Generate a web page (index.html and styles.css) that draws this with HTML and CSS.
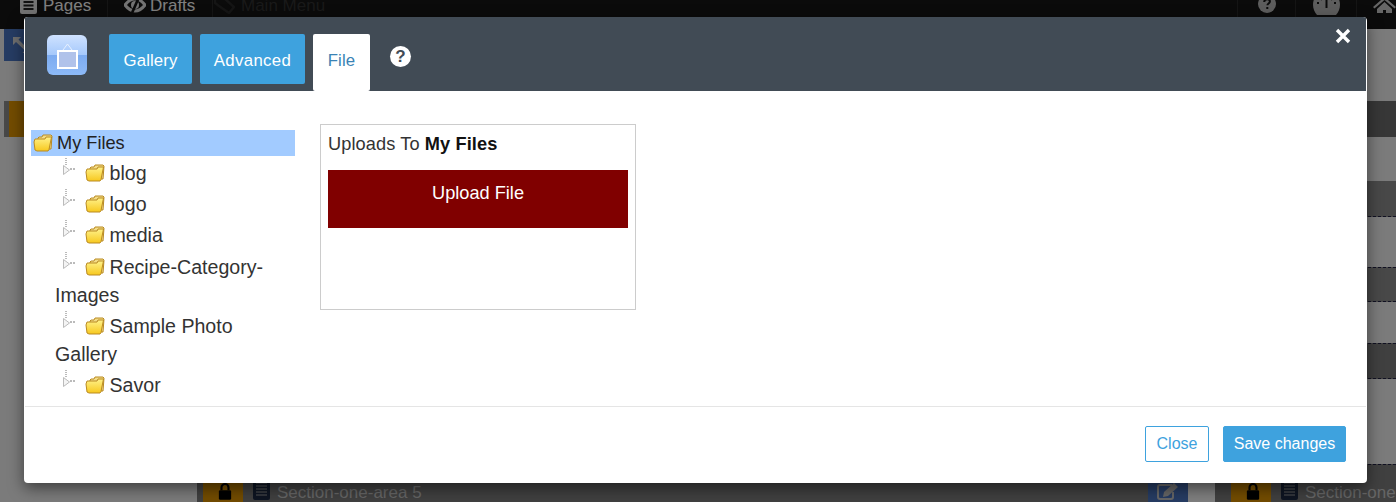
FILE: index.html
```html
<!DOCTYPE html>
<html lang="en">

<head>
  <meta charset="utf-8">
  <meta name="viewport" content="width=device-width, initial-scale=1">
  <title>File manager</title>
  <link rel="stylesheet" href="styles.css">
</head>

<body>
  <!-- page behind the dialog -->
  <div class="page">
    <nav class="topbar">
      <div class="nav-left">
        <span class="nav-item nav-pages">
          <svg class="nav-icon" width="17" height="17" viewBox="0 0 17 17"><rect width="17" height="17" rx="2" fill="#e6e6e6"/><path d="M3.500 5h10M3.500 8.500h10M3.500 12h10" stroke="#222" stroke-width="2"/></svg>
          Pages
        </span>
        <span class="nav-item nav-drafts">
          <svg class="nav-icon" width="22" height="16" viewBox="0 0 22 16"><path d="M1 8c3-4 6-6 10-6s7 2 10 6c-3 4-6 6-10 6S4 12 1 8z" fill="none" stroke="#e6e6e6" stroke-width="3"/><circle cx="11" cy="8" r="4" fill="#e6e6e6"/><path d="M15 0 8 16" stroke="#161616" stroke-width="2.600"/></svg>
          Drafts
        </span>
        <span class="nav-item nav-menu">
          <svg class="nav-icon" width="21" height="17" viewBox="0 0 21 17"><path d="M1 1h9l10 9-5 6L5 9 1 6z" fill="none" stroke="#2a2a2a" stroke-width="2.400"/></svg>
          Main Menu
        </span>
      </div>
      <div class="nav-right">
        <span class="nav-tool tool-help">
          <svg width="18" height="18" viewBox="0 0 18 18"><circle cx="9" cy="9" r="9" fill="#bbb"/><path d="M6.200 7c.2-2 1.300-2.800 2.900-2.800 1.700 0 2.800 1 2.800 2.300 0 2-2.500 2-2.500 3.800" fill="none" stroke="#161616" stroke-width="2"/><rect x="8.300" y="12" width="2" height="2" fill="#161616"/></svg>
        </span>
        <span class="nav-tool tool-gauge">
          <svg width="27" height="24" viewBox="0 0 27 24"><path d="M13.500 0C6 0 0 6 0 13.500c0 4 1.500 7.500 4 10.500h19c2.500-3 4-6.500 4-10.500C27 6 21 0 13.500 0z" fill="#bbb"/><path d="M13.500 8v9M7 6l2 3M20 6l-2 3M4 12h2M21 12h2" stroke="#161616" stroke-width="2"/></svg>
        </span>
        <span class="nav-tool tool-home">
          <svg width="23" height="16" viewBox="0 0 23 16"><path d="M11.500 0 0 10l1.500 1.500 10-8.500 10 8.500L23 10zM4 12v6h6v-5h3v5h6v-6l-7.500-7z" fill="#ccc"/></svg>
        </span>
      </div>
    </nav>

    <div class="toolbar">
      <span class="expand-btn">
        <svg width="20" height="20" viewBox="0 0 20 20"><path d="M0 0h8L5.500 2.500 14 11l2.500-2.500V16h-7l2.500-2.500L3 5 0 8z" fill="#ddd"/></svg>
      </span>
    </div>

    <div class="band band-head"><span class="band-grip"></span><span class="band-lock"></span></div>
    <div class="band band-b"></div>
    <div class="band band-c"></div>
    <div class="band band-d"></div>
    <div class="band band-e">
      <span class="band-lock">
        <svg width="14" height="17" viewBox="0 0 16 19"><path d="M4 8V5a4 4 0 0 1 8 0v3" fill="none" stroke="#000" stroke-width="2.400"/><rect x="1" y="8" width="14" height="11" rx="1.500" fill="#000"/></svg>
      </span>
      <svg class="band-doc" width="17" height="20" viewBox="0 0 17 20"><rect width="17" height="20" rx="2" fill="#1c2a44"/><path d="M3 3h11M3 6h11M3 9h11M3 12h11M3 15h11" stroke="#aaa"/></svg>
      <span class="band-title band-title-main">Section-one-area 5</span>
      <span class="band-edit">
        <svg width="22" height="17" viewBox="0 0 22 17"><path d="M15 2H3a2 2 0 0 0-2 2v10a2 2 0 0 0 2 2h11a2 2 0 0 0 2-2V9" fill="none" stroke="#ccc" stroke-width="2"/><path d="M7 9l10-9 4 4-10 9-5 1z" fill="#ccc"/></svg>
      </span>
      <span class="band-blank"></span>
      <span class="band-lock band-lock-second">
        <svg width="14" height="17" viewBox="0 0 16 19"><path d="M4 8V5a4 4 0 0 1 8 0v3" fill="none" stroke="#000" stroke-width="2.400"/><rect x="1" y="8" width="14" height="11" rx="1.500" fill="#000"/></svg>
      </span>
      <svg class="band-doc" width="17" height="20" viewBox="0 0 17 20"><rect width="17" height="20" rx="2" fill="#1c2a44"/><path d="M3 3h11M3 6h11M3 9h11M3 12h11M3 15h11" stroke="#aaa"/></svg>
      <span class="band-title">Section-one</span>
    </div>
  </div>

  <div class="backdrop"></div>

  <div class="modal">
    <div class="modal-header">
      <svg class="modal-logo" width="40" height="40" viewBox="0 0 40 40">
        <defs>
          <linearGradient id="logoBg" x1="0" y1="0" x2="0" y2="1">
            <stop offset="0" stop-color="#cfe2ff"/>
            <stop offset=".49" stop-color="#a6c9fb"/>
            <stop offset=".5" stop-color="#7cabf0"/>
            <stop offset="1" stop-color="#8dbaf7"/>
          </linearGradient>
        </defs>
        <rect width="40" height="40" rx="6" fill="url(#logoBg)"/>
        <path d="M16 15l4.500-6 4.500 6" fill="none" stroke="#e8f1ff"/>
        <rect x="11" y="16" width="19" height="17" fill="#b0c2ea" stroke="#fff" stroke-width="2"/>
      </svg>
      <a class="tab tab-gallery" href="#">Gallery</a>
      <a class="tab tab-advanced" href="#">Advanced</a>
      <a class="tab tab-active" href="#">File</a>
      <span class="help-mark">?</span>
      <svg class="close-x" width="16" height="16" viewBox="0 0 16 16"><path d="M2 2l12 12M14 2 2 14" stroke="#fff" stroke-width="3.400"/></svg>
    </div>

    <div class="modal-body">
      <div class="tree">
        <div class="tree-root">
          <svg class="folder" width="20" height="19" viewBox="0 0 20 19"><use href="#folderIcon"/></svg>
          <span class="root-label">My Files</span>
        </div>
        <ul class="tree-list">
          <li><svg class="expander" width="14" height="18" viewBox="0 0 14 18"><use href="#expanderIcon"/></svg><svg class="folder" width="20" height="19" viewBox="0 0 20 19"><use href="#folderIcon"/></svg><span class="node-label">blog</span></li>
          <li><svg class="expander" width="14" height="18" viewBox="0 0 14 18"><use href="#expanderIcon"/></svg><svg class="folder" width="20" height="19" viewBox="0 0 20 19"><use href="#folderIcon"/></svg><span class="node-label">logo</span></li>
          <li><svg class="expander" width="14" height="18" viewBox="0 0 14 18"><use href="#expanderIcon"/></svg><svg class="folder" width="20" height="19" viewBox="0 0 20 19"><use href="#folderIcon"/></svg><span class="node-label">media</span></li>
          <li><svg class="expander" width="14" height="18" viewBox="0 0 14 18"><use href="#expanderIcon"/></svg><svg class="folder" width="20" height="19" viewBox="0 0 20 19"><use href="#folderIcon"/></svg><span class="node-label">Recipe-Category-Images</span></li>
          <li><svg class="expander" width="14" height="18" viewBox="0 0 14 18"><use href="#expanderIcon"/></svg><svg class="folder" width="20" height="19" viewBox="0 0 20 19"><use href="#folderIcon"/></svg><span class="node-label">Sample Photo Gallery</span></li>
          <li><svg class="expander" width="14" height="18" viewBox="0 0 14 18"><use href="#expanderIcon"/></svg><svg class="folder" width="20" height="19" viewBox="0 0 20 19"><use href="#folderIcon"/></svg><span class="node-label">Savor</span></li>
        </ul>
      </div>

      <div class="upload-box">
        <p class="upload-title">Uploads To <b>My Files</b></p>
        <div class="upload-btn">Upload File</div>
      </div>
    </div>

    <div class="modal-footer">
      <button class="btn btn-close">Close</button>
      <button class="btn btn-save">Save changes</button>
    </div>
  </div>

  <svg class="icon-defs" width="0" height="0">
    <defs>
      <linearGradient id="folderFill" x1="0" y1="0" x2="0" y2="1">
        <stop offset="0" stop-color="#fff28a"/>
        <stop offset="1" stop-color="#f7c81e"/>
      </linearGradient>
      <g id="folderIcon">
        <path d="M5 16V5l1-1h3l1-2h8l1 1-1 13z" fill="#f3dc86" stroke="#b98a22"/>
        <path d="M1 9l1-3h10l1-2h5.500L16 16.500l-1 1.500H4l-2-1z" fill="url(#folderFill)" stroke="#b98a22"/>
      </g>
      <g id="expanderIcon">
        <path d="M4 0v7" stroke="#777" stroke-dasharray="1 1" fill="none"/>
        <path d="M1.500 7.500v9l6-4.500z" fill="#f4f4f4" stroke="#bbb"/>
        <path d="M8 11h6" stroke="#777" stroke-dasharray="2 1" fill="none"/>
      </g>
    </defs>
  </svg>
</body>

</html>
```

FILE: styles.css
```css
* {
  margin: 0;
  padding: 0;
  box-sizing: border-box;
}

ul {
  list-style: none;
}

html,
body {
  width: 100%;
  height: 100%;
  overflow: hidden;
}

body {
  background-color: #f6f6f6;
  font-family: "Liberation Sans", Arial, sans-serif;
  color: #333;
}

/* page behind the dialog */
.page {
  height: 502px;
  overflow: hidden;
}

.topbar {
  height: 29px;
  background-color: #161616;
  display: flex;
  justify-content: space-between;
  overflow: hidden;
  font-size: 17px;
  line-height: 20px;
}

.nav-left,
.nav-right {
  display: flex;
  height: 29px;
}

.nav-item {
  display: flex;
  align-items: flex-start;
  gap: 6px;
  height: 33px;
  margin-top: -4px;
  color: #fff;
}

.nav-pages {
  width: 107px;
  padding-left: 20px;
}

.nav-drafts {
  width: 105px;
  padding-left: 16px;
  gap: 4px;
  border-left: 1px solid #2a2a2a;
}

.nav-menu {
  padding-left: 1px;
  border-left: 1px solid #2a2a2a;
  color: #333;
}

.nav-icon {
  flex: none;
  margin-top: 1px;
}

.nav-tool {
  display: flex;
  align-items: flex-start;
  justify-content: center;
  height: 29px;
  border-left: 1px solid #2a2a2a;
}

.tool-help {
  width: 58px;
}

.tool-help svg {
  flex: none;
  margin-top: -5px;
}

.tool-gauge {
  width: 61px;
}

.tool-gauge svg {
  flex: none;
  margin-top: -9px;
}

.tool-home {
  width: 40px;
  justify-content: flex-start;
  padding-left: 16px;
}

.tool-home svg {
  flex: none;
  margin-top: -3px;
}

.toolbar {
  height: 72px;
  padding-left: 4px;
}

.expand-btn {
  display: block;
  width: 60px;
  height: 32px;
  padding: 8px 9px;
  background-color: #4c78c6;
}

.band {
  height: 36px;
  margin-left: 197px;
  background-color: #909090;
}

.band-head {
  margin-left: 4px;
  display: flex;
  background-color: #6e6e6e;
}

.band-grip {
  width: 5px;
  background-color: #909090;
}

.band-head .band-lock {
  height: 36px;
}

.band-b {
  margin-top: 44px;
  border-bottom: 1px dashed #224;
}

.band-c {
  margin-top: 50px;
  height: 35px;
  border-top: 1px dashed #224;
  border-bottom: 1px dashed #224;
}

.band-d {
  margin-top: 41px;
  background-color: #808080;
  border-top: 1px dashed #224;
  border-bottom: 1px dashed #224;
}

.band-e {
  margin-top: 85px;
  height: 38px;
  display: flex;
  align-items: flex-start;
  padding-left: 6px;
  background-color: #808080;
  border-top: 1px dashed #224;
}

.band-lock {
  flex: none;
  display: flex;
  justify-content: center;
  width: 40px;
  height: 37px;
  padding: 18px 0 0 4px;
  background-color: #e69900;
}

.band-doc {
  flex: none;
  margin: 15px 7px 0 10px;
}

.band-title {
  padding-top: 17px;
  font-size: 17px;
  line-height: 21px;
  color: #ccc;
  white-space: nowrap;
}

.band-title-main {
  flex: none;
  width: 871px;
}

.band-edit {
  flex: none;
  display: flex;
  justify-content: center;
  width: 40px;
  height: 37px;
  padding-top: 18px;
  background-color: #4c78c6;
}

.band-blank {
  flex: none;
  width: 27px;
  height: 37px;
  background-color: #fff;
}

.band-lock-second {
  margin-left: 16px;
}

.backdrop {
  position: absolute;
  inset: 0;
  background-color: rgba(0, 0, 0, .5);
}

/* dialog */
.modal {
  position: absolute;
  left: 24px;
  top: 17px;
  width: 1343px;
  height: 466px;
  background-color: #fff;
  border-radius: 4px;
  box-shadow: 0 5px 15px rgba(0, 0, 0, .5);
  overflow: hidden;
}

.modal-header {
  position: relative;
  display: flex;
  align-items: flex-start;
  height: 74px;
  margin: 0 1px;
  padding: 17px 0 0 22px;
  background-color: #414b55;
}

.modal-logo {
  flex: none;
  margin: 1px 22px 0 0;
}

.tab {
  display: block;
  flex: none;
  height: 50px;
  margin-right: 8px;
  line-height: 54px;
  font-size: 16.8px;
  letter-spacing: .1px;
  text-align: center;
  text-decoration: none;
  color: #fff;
  background-color: #3ea2de;
  border-radius: 2px;
}

.tab-gallery {
  width: 83px;
}

.tab-advanced {
  width: 105px;
  letter-spacing: .35px;
}

.tab-active {
  width: 57px;
  height: 57px;
  color: #3a83b5;
  background-color: #fff;
}

.help-mark {
  width: 21px;
  height: 21px;
  margin: 12px 0 0 12px;
  border-radius: 50%;
  background-color: #fff;
  color: #414b55;
  font-size: 17px;
  font-weight: bold;
  line-height: 21px;
  text-align: center;
}

.close-x {
  position: absolute;
  right: 15px;
  top: 11px;
}

.modal-body {
  display: flex;
  align-items: flex-start;
  height: 315px;
  overflow: hidden;
}

.tree {
  flex: none;
  width: 264px;
  margin: 39px 0 0 7px;
  font-size: 19.6px;
  line-height: 28px;
}

.tree-root {
  display: flex;
  align-items: center;
  height: 26px;
  padding-left: 2px;
  background-color: #a2cbff;
  color: #222;
  font-size: 18.2px;
}

.tree-root .folder {
  margin-top: -2px;
}

.root-label {
  margin-left: 4px;
}

.tree-list {
  padding: 3px 0 0 24px;
}

.tree-list li {
  margin-bottom: 3.2px;
}

.expander {
  margin: -3px 0 0 7px;
  vertical-align: 4px;
}

.folder {
  flex: none;
  vertical-align: -2px;
}

.tree-list .folder {
  margin-left: 9px;
}

.node-label {
  margin-left: 4.5px;
}

.upload-box {
  flex: none;
  width: 316px;
  height: 186px;
  margin: 33px 0 0 25px;
  padding: 7px;
  border: 1px solid #ccc;
}

.upload-title {
  height: 38px;
  font-size: 18.2px;
  line-height: 24px;
  letter-spacing: .1px;
}

.upload-title b {
  color: #111;
}

.upload-btn {
  height: 58px;
  padding-top: 10px;
  background-color: #800000;
  color: #fff;
  font-size: 18.2px;
  line-height: 26px;
  text-align: center;
}

.modal-footer {
  display: flex;
  justify-content: flex-end;
  gap: 14px;
  height: 77px;
  margin: 0 1px;
  padding: 19px 20px 0 0;
  border-top: 1px solid #e5e5e5;
}

.btn {
  height: 36px;
  font-family: inherit;
  font-size: 16px;
  border-radius: 2px;
  border: 1px solid #3ea2de;
  cursor: pointer;
}

.btn-close {
  width: 64px;
  background-color: #fff;
  color: #3ea2de;
}

.btn-save {
  width: 123px;
  background-color: #3ea2de;
  color: #fff;
}

.icon-defs {
  position: absolute;
}
```
